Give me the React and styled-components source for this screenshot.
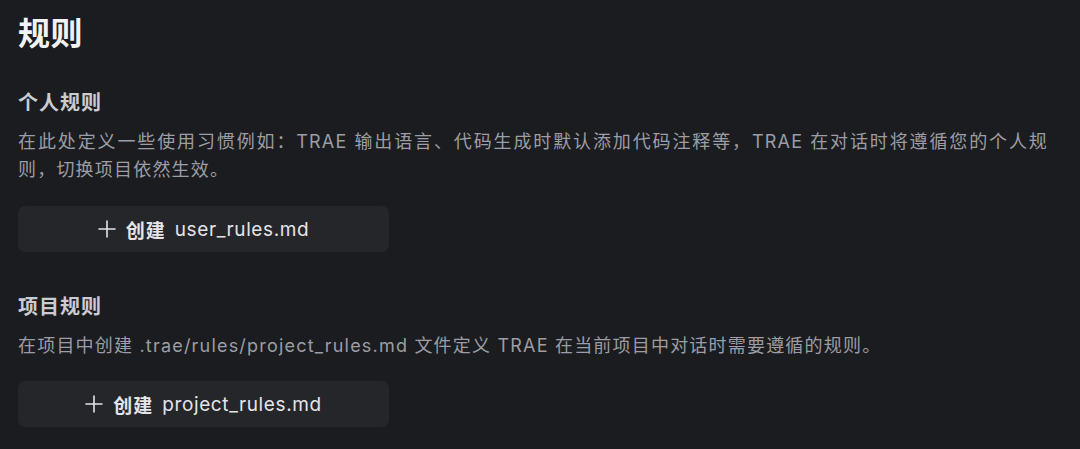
import React from "react";
import styled, { createGlobalStyle } from "styled-components";

const Global = createGlobalStyle`
  html, body { margin: 0; padding: 0; background: #1b1c1f; }
  body { font-family: Inter, "Noto Sans CJK SC", sans-serif; -webkit-font-smoothing: antialiased; }
`;

const Page = styled.div`
  box-sizing: border-box;
  width: 1080px;
  height: 449px;
  padding: 14px 18px 0 18px;
  background: #1b1c1f;
  display: flex;
  flex-direction: column;
  overflow: hidden;
`;

const Title = styled.h1`
  margin: 0;
  font-size: 32px;
  line-height: 40px;
  font-weight: 700;
  color: #f2f2f4;
  letter-spacing: 0.5px;
`;

const Section = styled.section`
  display: flex;
  flex-direction: column;
  align-items: flex-start;
  margin-top: ${(p) => p.$top}px;
`;

const Heading = styled.h2`
  margin: 0;
  font-size: 20px;
  line-height: 28px;
  font-weight: 700;
  color: #cbccd2;
  letter-spacing: 1px;
`;

const Desc = styled.p`
  margin: 11px 0 0 0;
  width: 1030px;
  font-size: 18px;
  line-height: 28px;
  color: #9c9da5;
  letter-spacing: 1.2px;
`;

const FullLine = styled.span`
  display: block;
  text-align: justify;
  text-align-last: justify;
`;

const CreateButton = styled.button`
  margin-top: ${(p) => p.$top}px;
  width: 371px;
  height: 46px;
  border: none;
  border-radius: 7px;
  background: #25262a;
  color: #e4e4e8;
  display: flex;
  align-items: center;
  justify-content: center;
  gap: 10px;
  font-family: Inter, "Noto Sans CJK SC", sans-serif;
  font-size: 19px;
  letter-spacing: 0.6px;
  padding: 0;
  cursor: pointer;
`;

const Label = styled.span`
  display: flex;
  align-items: center;
  gap: 9px;
`;

const Strong = styled.span`
  font-weight: 700;
  letter-spacing: 1px;
`;

const Plus = () => (
  <svg width="18" height="18" viewBox="0 0 18 18" fill="none">
    <path d="M9 1V17M1 9H17" stroke="#e4e4e8" strokeWidth="1.6" strokeLinecap="round" />
  </svg>
);

export default function App() {
  return (
    <>
      <Global />
      <Page>
        <Title>规则</Title>
        <Section $top={35}>
          <Heading>个人规则</Heading>
          <Desc>
            <FullLine>
              在此处定义一些使用习惯例如：TRAE 输出语言、代码生成时默认添加代码注释等，TRAE 在对话时将遵循您的个人规
            </FullLine>
            则，切换项目依然生效。
          </Desc>
          <CreateButton $top={22}>
            <Plus />
            <Label>
              <Strong>创建</Strong>
              <span>user_rules.md</span>
            </Label>
          </CreateButton>
        </Section>
        <Section $top={41}>
          <Heading>项目规则</Heading>
          <Desc>
            在项目中创建 .trae/rules/project_rules.md 文件定义 TRAE 在当前项目中对话时需要遵循的规则。
          </Desc>
          <CreateButton $top={21}>
            <Plus />
            <Label>
              <Strong>创建</Strong>
              <span>project_rules.md</span>
            </Label>
          </CreateButton>
        </Section>
      </Page>
    </>
  );
}
